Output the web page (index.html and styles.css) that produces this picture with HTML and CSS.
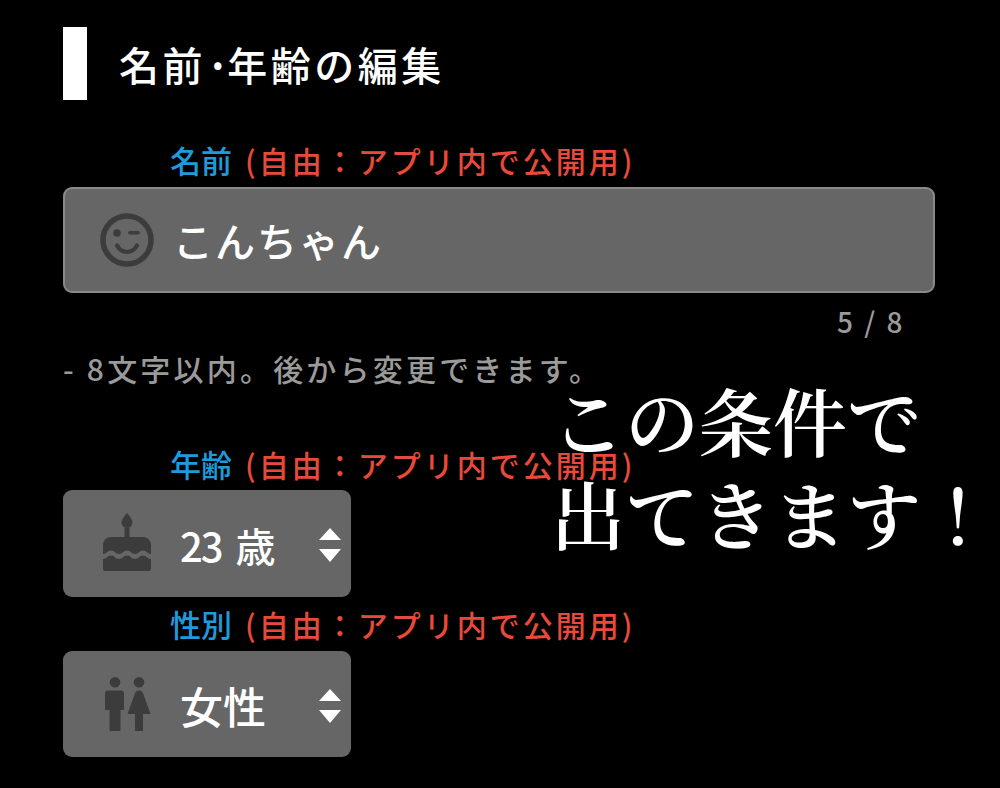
FILE: index.html
```html
<!DOCTYPE html>
<html lang="ja">
<head>
<meta charset="utf-8">
<title>名前・年齢の編集</title>
<link rel="stylesheet" href="styles.css">
</head>
<body>
<main class="page">
  <header class="head">
    <span class="head-bar"></span>
    <h1 class="head-title">名前<span class="dot">·</span>年齢の編集</h1>
  </header>

  <div class="label label-name"><span class="blue">名前</span><span class="red">(自由：アプリ内で公開用)</span></div>
  <div class="field field-name">
    <svg class="icon-smile" viewBox="0 0 54 54">
      <circle cx="27" cy="27" r="24" fill="none" stroke="#3c3c3c" stroke-width="5.500"/>
      <circle cx="17" cy="20" r="3.800" fill="#3c3c3c"/>
      <rect x="28" y="18" width="12" height="3.600" rx="1.800" fill="#3c3c3c"/>
      <path d="M17 32.500c2.500 4.500 6 6.500 10 6.500s7.500-2 10-6.500" fill="none" stroke="#3c3c3c" stroke-width="4.200" stroke-linecap="round"/>
    </svg>
    <span class="name-value">こんちゃん</span>
  </div>
  <div class="count">5 / 8</div>
  <p class="note">- 8文字以内。後から変更できます。</p>

  <div class="label label-age"><span class="blue">年齢</span><span class="red">(自由：アプリ内で公開用)</span></div>
  <div class="field select">
    <svg class="icon-cake" viewBox="0 0 48 58">
      <path d="M24 0c3.500 4 5.500 7 5.500 9.500a5.500 5.500 0 0 1-11 0c0-2.500 2-5.500 5.500-9.500z" fill="#3c3c3c"/>
      <rect x="21.500" y="15" width="5" height="10" fill="#3c3c3c"/>
      <path d="M8 24h32a8 8 0 0 1 8 8v9c-4 0-4-3.500-8-3.500s-4 3.500-8 3.500-4-3.500-8-3.500-4 3.500-8 3.500-4-3.500-8-3.500-4 3.500-8 3.500v-9a8 8 0 0 1 8-8z" fill="#3c3c3c"/>
      <path d="M0 46c4 0 4-3.500 8-3.500s4 3.500 8 3.500 4-3.500 8-3.500 4 3.500 8 3.500 4-3.500 8-3.500 4 3.500 8 3.500v10a2 2 0 0 1-2 2H2a2 2 0 0 1-2-2z" fill="#3c3c3c"/>
    </svg>
    <span class="select-value value-age"><span class="num">23</span><span class="unit">歳</span></span>
    <svg class="arrows" viewBox="0 0 22 34"><path d="M11 0l11 12H0zM0 21h22L11 34z" fill="#fff"/></svg>
  </div>

  <div class="label label-sex"><span class="blue">性別</span><span class="red">(自由：アプリ内で公開用)</span></div>
  <div class="field select select-sex">
    <svg class="icon-people" viewBox="0 0 46 54">
      <circle cx="10" cy="5.300" r="5.300" fill="#3c3c3c"/>
      <circle cx="34" cy="5.300" r="5.300" fill="#3c3c3c"/>
      <path d="M3 13.500h13a3 3 0 0 1 3 3V33h-3.500v21h-11V33H0V16.500a3 3 0 0 1 3-3z" fill="#3c3c3c"/>
      <path d="M34 13.500c2.500 0 3.500 1.500 4.500 4L45.500 37H38v17h-8V37h-7.500l7-19.500c1-2.500 2-4 4.500-4z" fill="#3c3c3c"/>
    </svg>
    <span class="select-value value-sex">女性</span>
    <svg class="arrows" viewBox="0 0 22 34"><path d="M11 0l11 12H0zM0 21h22L11 34z" fill="#fff"/></svg>
  </div>
</main>
<div class="caption">この条件で<br>出てきます！</div>
</body>
</html>
```
FILE: styles.css
```css
html, body {
  margin: 0;
  padding: 0;
  background: #000;
}
body {
  width: 1000px;
  height: 788px;
  overflow: hidden;
  position: relative;
  font-family: "Noto Sans CJK JP", "Noto Sans", sans-serif;
}
.page {
  padding: 27px 65px 0 63px;
  display: flex;
  flex-direction: column;
  align-items: flex-start;
}
.head {
  display: flex;
  align-items: center;
  gap: 32px;
  height: 73px;
}
.head-bar {
  width: 24px;
  height: 73px;
  background: #fff;
}
.head-title {
  margin: 0;
  color: #fff;
  font-size: 40px;
  font-weight: 500;
  line-height: 1;
  letter-spacing: 3.500px;
}
.dot { margin-right: -6px; font-weight: 700; }
.label {
  margin-left: 107px;
  font-size: 31px;
  font-weight: 500;
  line-height: 40px;
  height: 40px;
  white-space: nowrap;
}
.label-name { margin-top: 40px; }
.label-age { margin-top: 56px; }
.label-sex { margin-top: 7px; }
.blue { color: #1f9bdc; }
.red { color: #e74a3a; font-size: 30px; letter-spacing: 3px; margin-left: 13px; }
.field {
  background: #666;
  border-radius: 9px;
  display: flex;
  align-items: center;
  box-sizing: border-box;
}
.field-name {
  width: 872px;
  height: 106px;
  margin-top: 7px;
  border: 2px solid #8a8a8a;
  padding-left: 35px;
}
.icon-smile { width: 54px; height: 54px; flex: none; }
.name-value {
  margin-left: 19px;
  color: #fff;
  font-size: 40px;
  font-weight: 500;
  letter-spacing: 2px;
}
.count {
  align-self: flex-end;
  margin: 11px 0 0;
  padding-right: 30px;
  color: #9a9a9a;
  font-size: 28px;
  font-weight: 500;
  line-height: 34px;
  letter-spacing: 2.500px;
}
.note {
  margin: 10px 0 0;
  color: #9a9a9a;
  font-size: 30px;
  font-weight: 500;
  line-height: 40px;
  letter-spacing: 3.200px;
  white-space: nowrap;
}
.select {
  width: 288px;
  height: 107px;
  margin-top: 6px;
  position: relative;
  padding-left: 40px;
}
.select-sex { height: 106px; margin-top: 7px; }
.icon-cake { width: 48px; height: 58px; flex: none; margin-top: -3px; }
.icon-people { width: 46px; height: 54px; flex: none; margin-left: 2px; }
.select-value { color: #fff; font-weight: 500; white-space: nowrap; }
.value-age { margin-left: 29px; font-size: 40px; margin-top: 3px; }
.num { letter-spacing: -2px; }
.unit { margin-left: 14px; }
.value-sex { margin-left: 29px; font-size: 43px; margin-top: 2px; }
.arrows {
  position: absolute;
  right: 10px;
  top: 38px;
  width: 22px;
  height: 34px;
}
.caption {
  position: absolute;
  left: 551px;
  top: 373px;
  color: #fff;
  font-family: "Noto Serif CJK JP", "Liberation Serif", "Noto Sans CJK JP", serif;
  font-size: 74px;
  font-weight: 600;
  line-height: 93px;
  white-space: nowrap;
}
```
